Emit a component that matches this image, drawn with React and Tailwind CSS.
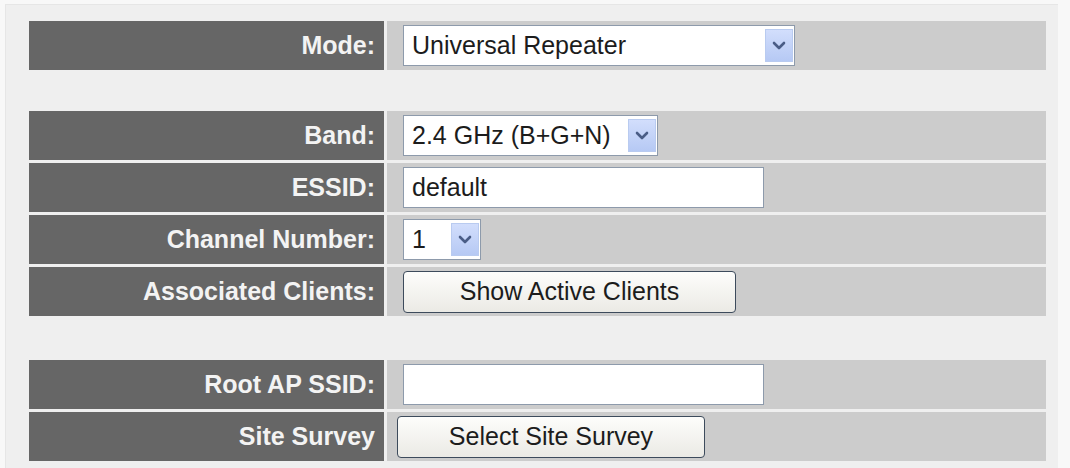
const font = { fontFamily: '"Liberation Sans", Arial, sans-serif' };

function Arrow() {
  return (
    <span className="flex h-full w-[28px] items-center justify-center border border-[#b9cbf0] bg-gradient-to-b from-[#d2defc] to-[#b6c9f4]">
      <svg width="14" height="9" viewBox="0 0 14 9">
        <path d="M2 2 L7 7 L12 2" fill="none" stroke="#4a5d86" strokeWidth="2.6" strokeLinecap="round" strokeLinejoin="round" />
      </svg>
    </span>
  );
}

function Select({ value, width }) {
  return (
    <div className={`flex h-[41px] items-stretch border border-[#8d9aab] bg-white py-[3px] pr-[1px] ${width}`}>
      <span className="flex flex-1 items-center pl-[8px] text-[25px] text-[#1c1c1c]">{value}</span>
      <Arrow />
    </div>
  );
}

function Input({ value }) {
  return (
    <div className="flex h-[41px] w-[361px] items-center border border-[#8d9aab] bg-white pl-[8px] text-[25px] text-[#1c1c1c]">
      {value}
    </div>
  );
}

function Button({ children, width, extra = '' }) {
  return (
    <div
      className={`flex h-[42px] items-center justify-center rounded-[4px] border border-[#3d4b5c] bg-gradient-to-b from-[#fdfdfb] to-[#ebeae5] text-[25px] text-[#1c1c1c] ${width} ${extra}`}
    >
      {children}
    </div>
  );
}

function Row({ label, children }) {
  return (
    <div className="grid h-[49px] grid-cols-[355px_1fr] gap-x-[3px]">
      <div className="flex items-center justify-end bg-[#666666] pr-[9px] text-[25px] font-bold text-[#f3f3f3]">
        {label}
      </div>
      <div className="flex items-center bg-[#cccccc] pl-[16px]">{children}</div>
    </div>
  );
}

export default function App() {
  return (
    <div className="h-[468px] w-full bg-[#f8f8f8] pl-[5px] pr-[12px] pt-[4px]" style={font}>
      <div className="h-full border-l border-t border-[#e6e6e6] bg-[#efefef] pl-[23px] pr-[12px] pt-[16px]">
        <div className="flex flex-col gap-y-[3px]">
          <Row label="Mode:">
            <Select value="Universal Repeater" width="w-[392px]" />
          </Row>
          <div className="h-[35px]" />
          <Row label="Band:">
            <Select value="2.4 GHz (B+G+N)" width="w-[255px]" />
          </Row>
          <Row label="ESSID:">
            <Input value="default" />
          </Row>
          <Row label="Channel Number:">
            <Select value="1" width="w-[78px]" />
          </Row>
          <Row label="Associated Clients:">
            <Button width="w-[333px]">Show Active Clients</Button>
          </Row>
          <div className="h-[38px]" />
          <Row label="Root AP SSID:">
            <Input value="" />
          </Row>
          <Row label="Site Survey">
            <Button width="w-[308px]" extra="-ml-[6px]">Select Site Survey</Button>
          </Row>
        </div>
      </div>
    </div>
  );
}
